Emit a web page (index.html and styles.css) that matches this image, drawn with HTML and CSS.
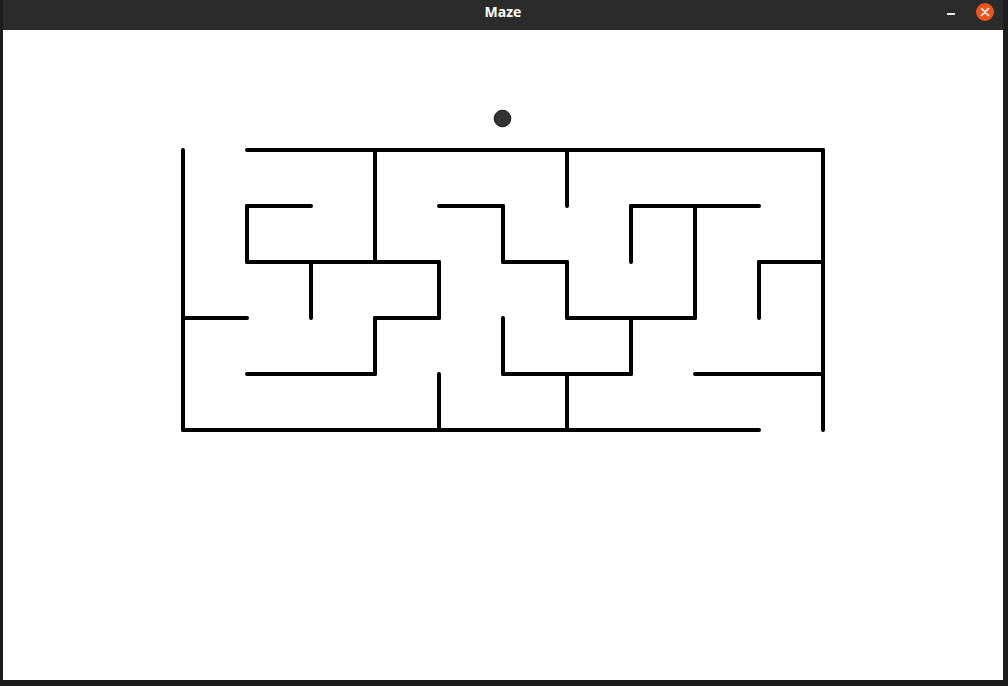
FILE: index.html
```html
<!DOCTYPE html>
<html>
<head>
<meta charset="utf-8">
<title>Maze</title>
<link rel="stylesheet" href="styles.css">
</head>
<body>
<div class="window">
  <header class="titlebar">
    <div class="spacer"></div>
    <div class="title">Maze</div>
    <div class="controls">
      <span class="minimize"></span>
      <span class="close">
        <svg width="18" height="18" viewBox="0 0 18 18"><path d="M5.5 5.5 L12.5 12.5 M12.5 5.5 L5.5 12.5" stroke="#fff" stroke-width="1.6" stroke-linecap="round"/></svg>
      </span>
    </div>
  </header>
  <main class="content">
    <svg class="maze" width="1000" height="650" viewBox="3 30 1000 650">
      <circle cx="502.5" cy="118.5" r="8.3" fill="#333" stroke="#111" stroke-width="1"/>
      <g stroke="#000" stroke-width="4" stroke-linecap="round" fill="none">
        <line x1="247" y1="150" x2="823" y2="150"/>
        <line x1="247" y1="206" x2="311" y2="206"/>
        <line x1="439" y1="206" x2="503" y2="206"/>
        <line x1="631" y1="206" x2="759" y2="206"/>
        <line x1="247" y1="262" x2="439" y2="262"/>
        <line x1="503" y1="262" x2="567" y2="262"/>
        <line x1="759" y1="262" x2="823" y2="262"/>
        <line x1="183" y1="318" x2="247" y2="318"/>
        <line x1="375" y1="318" x2="439" y2="318"/>
        <line x1="567" y1="318" x2="695" y2="318"/>
        <line x1="247" y1="374" x2="375" y2="374"/>
        <line x1="503" y1="374" x2="631" y2="374"/>
        <line x1="695" y1="374" x2="823" y2="374"/>
        <line x1="183" y1="430" x2="759" y2="430"/>

        <line x1="183" y1="150" x2="183" y2="430"/>
        <line x1="247" y1="206" x2="247" y2="262"/>
        <line x1="311" y1="262" x2="311" y2="318"/>
        <line x1="375" y1="150" x2="375" y2="262"/>
        <line x1="375" y1="318" x2="375" y2="374"/>
        <line x1="439" y1="262" x2="439" y2="318"/>
        <line x1="439" y1="374" x2="439" y2="430"/>
        <line x1="503" y1="206" x2="503" y2="262"/>
        <line x1="503" y1="318" x2="503" y2="374"/>
        <line x1="567" y1="150" x2="567" y2="206"/>
        <line x1="567" y1="262" x2="567" y2="318"/>
        <line x1="567" y1="374" x2="567" y2="430"/>
        <line x1="631" y1="206" x2="631" y2="262"/>
        <line x1="631" y1="318" x2="631" y2="374"/>
        <line x1="695" y1="206" x2="695" y2="318"/>
        <line x1="759" y1="262" x2="759" y2="318"/>
        <line x1="823" y1="150" x2="823" y2="430"/>
      </g>
    </svg>
  </main>
</div>
</body>
</html>
```

FILE: styles.css
```css
html, body {
  margin: 0;
  padding: 0;
}

body {
  width: 1008px;
  height: 686px;
  background: #1c1c1c;
  overflow: hidden;
  font-family: "Open Sans", "DejaVu Sans", sans-serif;
}

.window {
  width: 1000px;
  margin-left: 3px;
  display: flex;
  flex-direction: column;
}

.titlebar {
  height: 30px;
  background: #2b2b2b;
  display: grid;
  grid-template-columns: 1fr auto 1fr;
  align-items: center;
}

.title {
  color: #ffffff;
  font-weight: 700;
  font-size: 14px;
  line-height: 30px;
  padding-top: 0;
  margin-top: -6px;
}

.controls {
  display: flex;
  justify-content: flex-end;
  align-items: center;
  padding-right: 9px;
  gap: 21px;
  margin-top: -6px;
}

.minimize {
  display: block;
  width: 8px;
  height: 2px;
  background: #e8e8e8;
  margin-top: 4px;
}

.close {
  display: flex;
  width: 18px;
  height: 18px;
  border-radius: 50%;
  background: #e9541f;
}

.content {
  height: 650px;
  background: #ffffff;
}

.maze {
  display: block;
}
```
